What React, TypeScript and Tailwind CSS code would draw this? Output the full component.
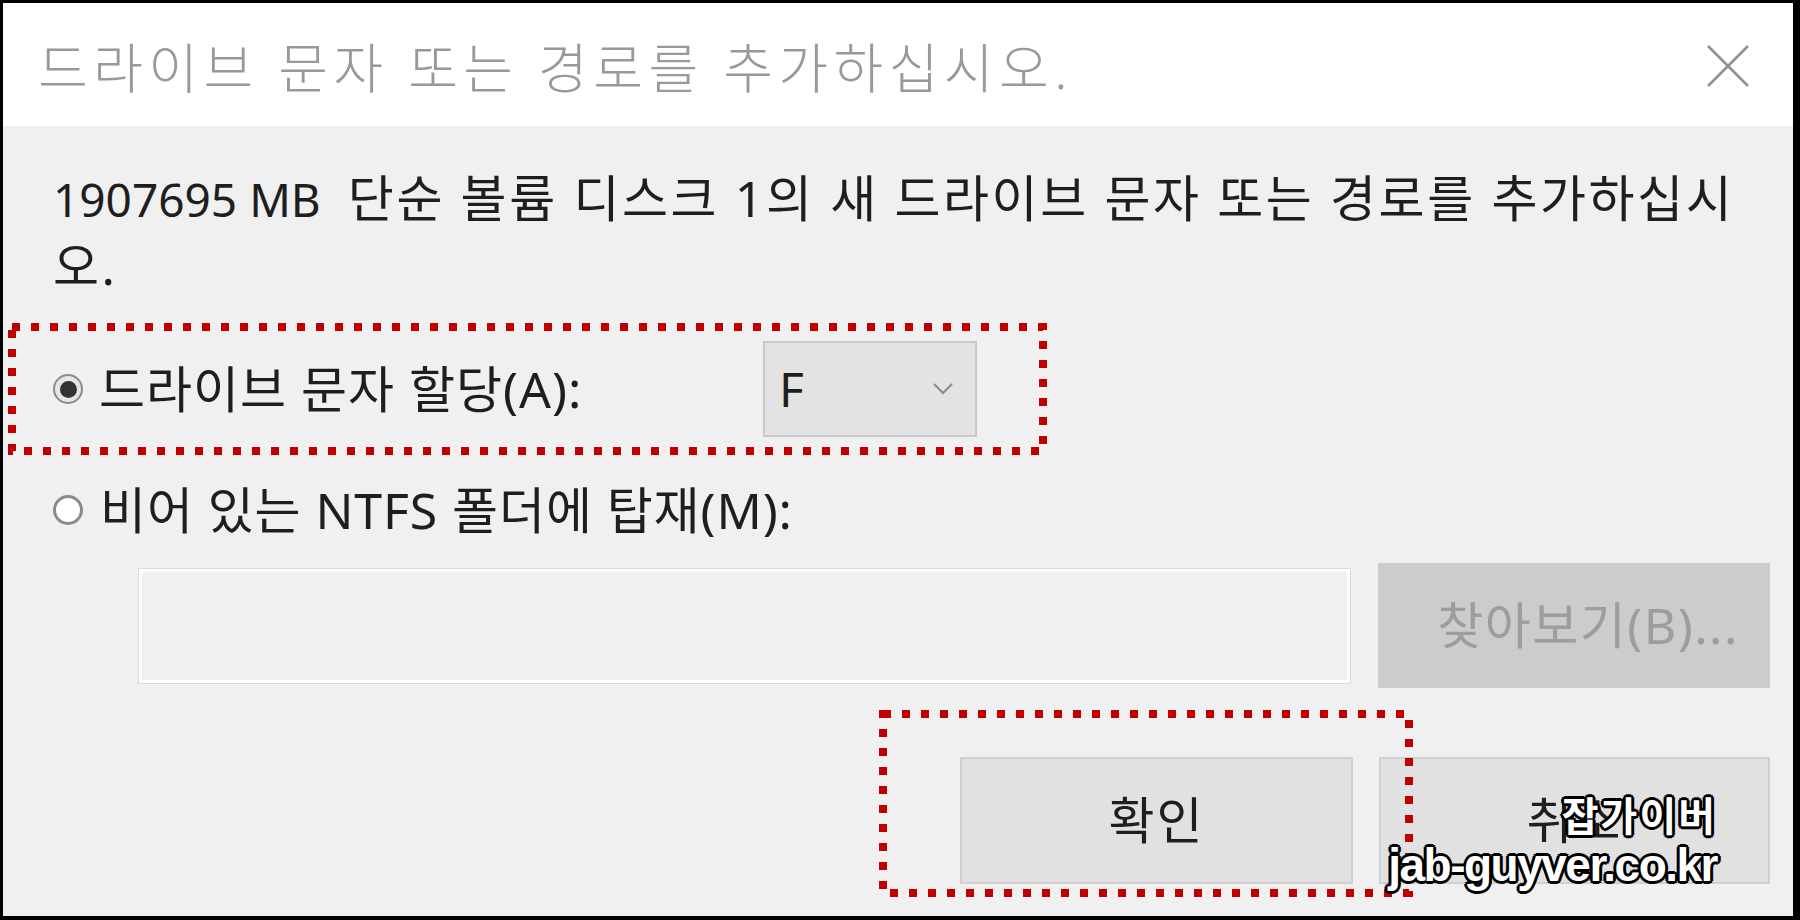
import React from 'react';

// ── Dotted annotation frame (red, square dots) ───────────────
const DotFrame: React.FC<{ className: string; w: number; h: number }> = ({ className, w, h }) => (
  <svg className={`absolute pointer-events-none ${className}`} width={w} height={h} viewBox={`0 0 ${w} ${h}`}>
    <rect x={4} y={4} width={w - 8} height={h - 8} fill="none" stroke="#c00000" strokeWidth={8} strokeDasharray="8 11" />
  </svg>
);

const Radio: React.FC<{ checked?: boolean }> = ({ checked }) =>
  checked ? (
    <span className="w-[30px] h-[30px] rounded-full border-2 border-[#8a8a8a] bg-[#e6e6e6] flex items-center justify-center shrink-0">
      <span className="w-[17px] h-[17px] rounded-full bg-[#333333]" />
    </span>
  ) : (
    <span className="w-[30px] h-[30px] rounded-full border-[3px] border-[#8a8a8a] bg-white shrink-0" />
  );

const outline = '[text-shadow:2px_2px_0_#000,-2px_2px_0_#000,2px_-2px_0_#000,-2px_-2px_0_#000,0_3px_0_#000,0_-3px_0_#000,3px_0_0_#000,-3px_0_0_#000]';

export default function App() {
  return (
    <div className="w-[1800px] h-[920px] flex flex-col bg-[#f0f0f0] border-t-[3px] border-l-[3px] border-r-[7px] border-b-[4px] border-black font-['Noto_Sans','Noto_Sans_CJK_KR',sans-serif] overflow-hidden">
      {/* Title bar */}
      <div className="h-[123px] shrink-0 bg-white flex items-center justify-between pl-[35px] pr-[44px]">
        <span className="text-[54px] tracking-[5.5px] text-[#999999] font-light leading-none pt-[6px]">드라이브 문자 또는 경로를 추가하십시오.</span>
        <svg width="42" height="42" viewBox="0 0 42 42" className="mt-[2px]">
          <path d="M1 1 L41 41 M41 1 L1 41" stroke="#8f8f8f" strokeWidth="2.5" fill="none" />
        </svg>
      </div>

      {/* Body */}
      <div className="relative flex-1 flex flex-col pl-[50px] pr-[23px] text-[#1e1e1e]">
        <p className="mt-[39px] text-[46px] leading-[67px]">
          1907695 MB
          <span className="ml-[27px] text-[50px] tracking-[2.6px]">
            단순 볼륨 디스크 1의 새 드라이브 문자 또는 경로를 추가하십시
            <br />
            오.
          </span>
        </p>

        <div className="mt-[40px] h-[96px] flex items-center">
          <Radio checked />
          <span className="ml-[16px] w-[664px] text-[50px] tracking-[1px]">드라이브 문자 할당(A):</span>
          <div className="w-[214px] h-[96px] bg-[#e3e3e3] border-2 border-[#c8c8c8] flex items-center justify-between pl-[14px] pr-[22px]">
            <span className="text-[48px]">F</span>
            <svg width="20" height="12" viewBox="0 0 20 12">
              <path d="M1 1 L10 10 L19 1" stroke="#8a8a8a" strokeWidth="2" fill="none" />
            </svg>
          </div>
        </div>

        <div className="mt-[43px] h-[60px] flex items-center">
          <Radio />
          <span className="ml-[17px] text-[50px] tracking-[0.9px]">비어 있는 NTFS 폴더에 탑재(M):</span>
        </div>

        <div className="mt-[23px] h-[125px] flex items-center pl-[86px]">
          <div className="w-[1211px] h-[114px] border-[3px] border-white outline-1 outline-[#d9d9d9] bg-[#f0f0f0]" />
          <div className="ml-[28px] w-[392px] h-[125px] bg-[#cccccc] flex items-center justify-center pl-[28px] text-[50px] tracking-[1.5px] text-[#9d9d9d]">
            찾아보기(B)...
          </div>
        </div>

        <div className="mt-[69px] flex justify-end gap-[26px]">
          <div className="w-[393px] h-[127px] bg-[#e1e1e1] border-2 border-[#d0d0d0] flex items-center justify-center text-[50px] tracking-[2px]">
            확인
          </div>
          <div className="w-[391px] h-[127px] bg-[#e1e1e1] border-2 border-[#d0d0d0] flex items-center justify-center text-[50px] tracking-[2px]">
            취소
          </div>
        </div>

        {/* Annotation frames */}
        <DotFrame className="left-[5px] top-[197px]" w={1039} h={132} />
        <DotFrame className="left-[876px] top-[584px]" w={534} h={187} />

        {/* Watermark */}
        <div className="absolute right-[76px] bottom-[28px] flex flex-col items-end text-white font-bold leading-none">
          <span className={`text-[40px] tracking-[2px] font-['Noto_Sans_CJK_KR',sans-serif] ${outline}`}>잡가이버</span>
          <span className={`mt-[8px] text-[46px] tracking-[-1.5px] font-['Liberation_Sans',sans-serif] ${outline}`}>jab-guyver.co.kr</span>
        </div>
      </div>
    </div>
  );
}
